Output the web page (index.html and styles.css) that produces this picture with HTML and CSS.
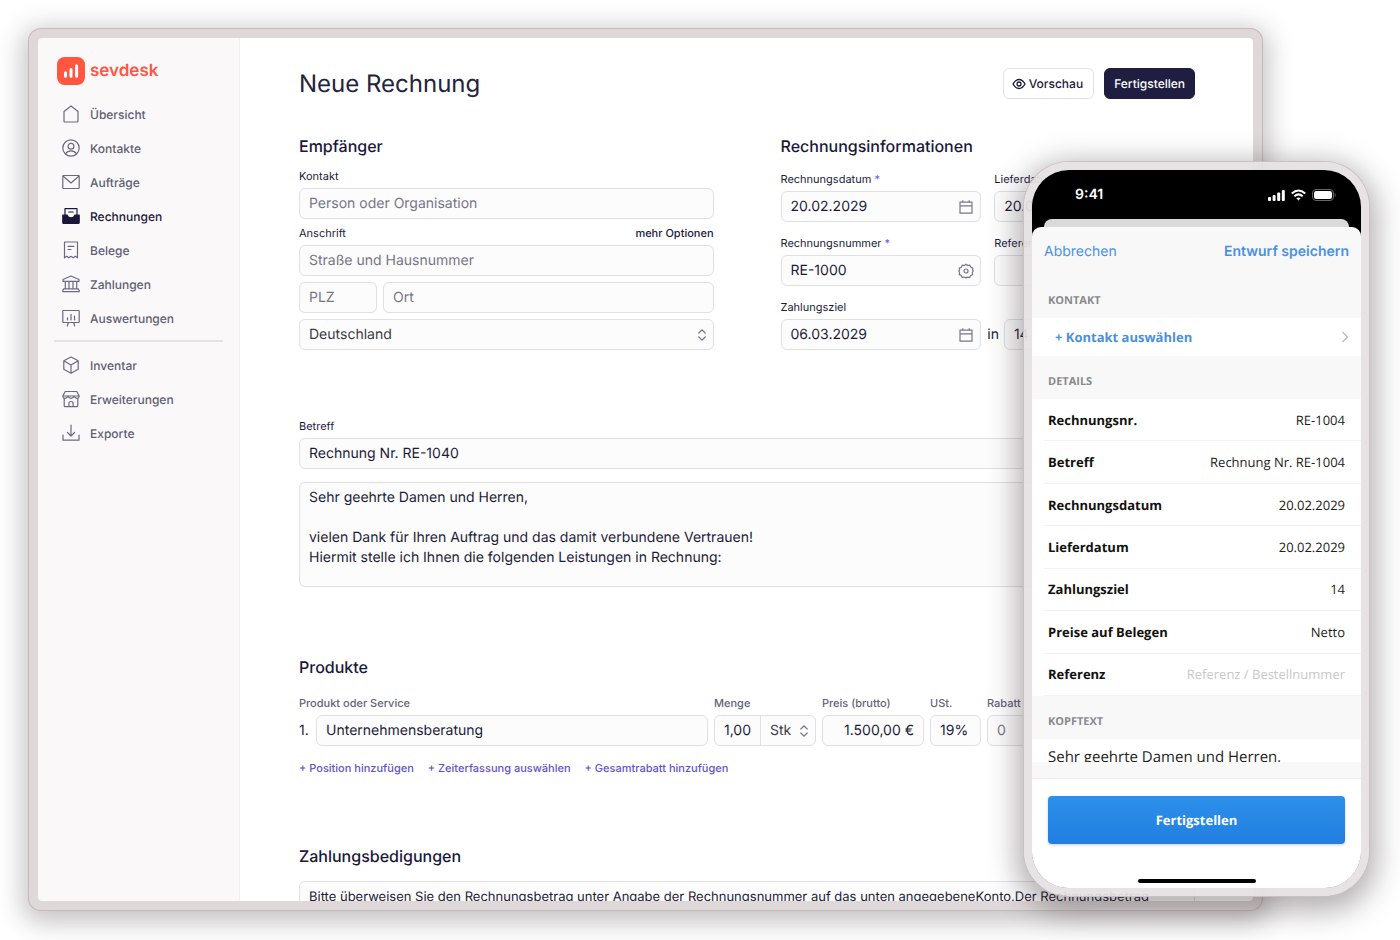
FILE: index.html
```html
<!DOCTYPE html>
<html lang="de">
<head>
<meta charset="utf-8">
<meta name="viewport" content="width=device-width, initial-scale=1">
<title>Neue Rechnung – sevdesk</title>
<link rel="stylesheet" href="styles.css">
</head>
<body>
<svg class="sprite" aria-hidden="true">
  <symbol id="calendar" viewBox="0 0 16 16"><path d="M2 3.200h12v11H2zM2 6.800h12M4.800 1.200v2M11.200 1.200v2"/></symbol>
  <symbol id="updown" viewBox="0 0 10 14"><path d="M1.800 5L5 1.800 8.200 5M1.800 9L5 12.200 8.200 9"/></symbol>
</svg>
<div class="stage">
  <div class="desktop">
    <aside class="sidebar">
      <a class="brand" href="#">
        <svg class="brand-mark" viewBox="0 0 28 28"><rect width="28" height="28" rx="7.500" fill="#ff5640"/><path d="M8.500 15.800v3.400M14 12.500v6.700M19.600 8.700v10.500" stroke="#fff" stroke-width="3" stroke-linecap="round"/></svg>
        <span>sevdesk</span>
      </a>
      <nav class="nav">
        <a href="#"><svg viewBox="0 0 18 18"><path d="M2 6.500L9 1l7 5.500V16q0 1-1 1H3q-1 0-1-1z"/></svg>Übersicht</a>
        <a href="#"><svg viewBox="0 0 18 18"><circle cx="9" cy="9" r="8.200"/><circle cx="9" cy="7.200" r="2.900"/><path d="M3.500 14.800c1.400-2.200 3.300-3 5.500-3s4.100.8 5.500 3"/></svg>Kontakte</a>
        <a href="#"><svg viewBox="0 0 18 18"><rect x=".8" y="2.500" width="16.400" height="13" rx=".8"/><path d="M1.200 3.200L9 10l7.800-6.800"/></svg>Aufträge</a>
        <a href="#" class="active" aria-current="page"><svg viewBox="0 0 18 18"><path d="M3 9V1.700h12V9"/><path d="M6.800 5h4.400"/><path class="solid" d="M.8 8.200h4.400q.8 2.600 3.800 2.600t3.800-2.600h4.400v7.300q0 1-1 1H1.800q-1 0-1-1z"/></svg>Rechnungen</a>
        <a href="#"><svg viewBox="0 0 18 18"><path d="M2.500 1h13v15.800l-2.200-1.500-2.100 1.500L9 15.300l-2.200 1.500-2.100-1.500-2.200 1.500zM6 5.300h6M6 8.500h3"/></svg>Belege</a>
        <a href="#"><svg viewBox="0 0 18 18"><path d="M9 1l8 3.500v1.800H1V4.500zM3.300 6.500v7.200M7 6.500v7.200M11 6.500v7.200M14.700 6.500v7.200M1.800 13.800h14.400M.8 16.600h16.400v-1.300l-1-1.400H1.800l-1 1.400z"/></svg>Zahlungen</a>
        <a href="#"><svg viewBox="0 0 18 18"><rect x=".8" y="1.500" width="16.400" height="12" rx=".8"/><path d="M5.500 8.800V11M9 5.300V11M12.500 7v4M6.300 13.800l-1 3.200M11.700 13.800l1 3.200"/></svg>Auswertungen</a>
      </nav>
      <nav class="nav nav-more">
        <a href="#"><svg viewBox="0 0 18 18"><path d="M9 1l7.200 3.800v8.500L9 17.200l-7.200-3.900V4.800zM1.800 4.800L9 9l7.200-4.200M9 9v8.200"/></svg>Inventar</a>
        <a href="#"><svg viewBox="0 0 18 18"><path d="M3.200 1.500h11.600L17.200 6q-.3 2.400-2.200 2.400T12 6.300q-.9 2.100-3 2.100T6 6.300Q5 8.400 3 8.400T.8 6zM.8 6h16.400M2.200 8.500v7.200q0 1 1 1h11.600q1 0 1-1V8.500M6.900 16.500v-3q0-2 2.100-2t2.100 2v3"/></svg>Erweiterungen</a>
        <a href="#"><svg viewBox="0 0 18 18"><path d="M9 1v10.500M5.500 8.500L9 12l3.500-3.500M1 11v5.200h16V11"/></svg>Exporte</a>
      </nav>
    </aside>

    <main class="content">
      <header class="page-head">
        <h1>Neue Rechnung</h1>
        <div class="actions">
          <button type="button" class="btn"><svg viewBox="0 0 14 12"><path d="M1 6q2.500-4.500 6-4.500T13 6q-2.500 4.500-6 4.500T1 6z"/><circle cx="7" cy="6" r="2"/></svg>Vorschau</button>
          <button type="button" class="btn btn-dark">Fertigstellen</button>
        </div>
      </header>

      <form class="form">
        <div class="columns">
          <section>
            <h2>Empfänger</h2>
            <div class="address">
              <div class="group"><label for="kontakt">Kontakt</label><input class="field" id="kontakt" placeholder="Person oder Organisation"></div>
              <div class="group">
                <div class="label-row"><label for="strasse">Anschrift</label><a href="#">mehr Optionen</a></div>
                <input class="field" id="strasse" placeholder="Straße und Hausnummer">
              </div>
              <div class="city"><input class="field" aria-label="PLZ" placeholder="PLZ"><input class="field" aria-label="Ort" placeholder="Ort"></div>
              <div class="field combo"><select aria-label="Land"><option>Deutschland</option></select><svg class="updown"><use href="#updown"/></svg></div>
            </div>
          </section>
          <section>
            <h2>Rechnungsinformationen</h2>
            <div class="info">
              <div class="group"><label for="rdatum">Rechnungsdatum <span class="req">*</span></label><div class="field combo"><input id="rdatum" value="20.02.2029"><svg class="icon"><use href="#calendar"/></svg></div></div>
              <div class="group"><label for="ldatum">Lieferdatum</label><div class="field combo"><input id="ldatum" value="20.02.2029"></div></div>
              <div class="group"><label for="rnr">Rechnungsnummer <span class="req">*</span></label><div class="field combo"><input id="rnr" value="RE-1000"><svg class="icon" viewBox="0 0 16 16"><circle cx="8" cy="8" r="2"/><path d="M8 1.300l1.700 1.300 2.200-.4.900 2 2 .9-.3 2.200L15.300 8l-1 1.500.3 2.200-2 .8-.9 2-2.100-.4L8 14.900l-1.700-.9-2.100.4-.9-2-2-.8.3-2.200L.8 8l.8-.9-.3-2 2-.9.9-2 2.200.4z"/></svg></div></div>
              <div class="group"><label for="ref">Referenz</label><input class="field" id="ref"></div>
              <div class="group"><label for="ziel">Zahlungsziel</label><div class="field combo"><input id="ziel" value="06.03.2029"><svg class="icon"><use href="#calendar"/></svg></div></div>
              <div class="days"><label for="tage">in</label><input class="field" id="tage" value="14"></div>
            </div>
          </section>
        </div>

        <section class="subject">
          <div class="group"><label for="betreff">Betreff</label><input class="field" id="betreff" value="Rechnung Nr. RE-1040"></div>
          <textarea class="field area" aria-label="Kopftext">Sehr geehrte Damen und Herren,

vielen Dank für Ihren Auftrag und das damit verbundene Vertrauen!
Hiermit stelle ich Ihnen die folgenden Leistungen in Rechnung:</textarea>
        </section>

        <section class="block">
          <h2>Produkte</h2>
          <div class="products">
            <div class="group"><label for="produkt">Produkt oder Service</label><div class="numbered"><span>1.</span><input class="field" id="produkt" value="Unternehmensberatung"></div></div>
            <div class="group"><label for="menge">Menge</label><div class="field combo split"><input id="menge" value="1,00"><div class="unit"><select aria-label="Einheit"><option>Stk</option></select><svg class="updown"><use href="#updown"/></svg></div></div></div>
            <div class="group"><label for="preis">Preis (brutto)</label><input class="field right" id="preis" value="1.500,00 €"></div>
            <div class="group"><label for="ust">USt.</label><input class="field" id="ust" value="19%"></div>
            <div class="group"><label for="rabatt">Rabatt</label><input class="field" id="rabatt" placeholder="0"></div>
          </div>
          <div class="links"><a href="#">+ Position hinzufügen</a><a href="#">+ Zeiterfassung auswählen</a><a href="#">+ Gesamtrabatt hinzufügen</a></div>
        </section>

        <section class="block">
          <h2>Zahlungsbedigungen</h2>
          <textarea class="field area terms" aria-label="Zahlungsbedigungen">Bitte überweisen Sie den Rechnungsbetrag unter Angabe der Rechnungsnummer auf das unten angegebeneKonto.Der Rechnungsbetrag</textarea>
        </section>
      </form>
    </main>
  </div>

  <div class="phone">
    <div class="screen">
      <div class="status">
        <span>9:41</span>
        <div class="status-icons">
          <svg width="17" height="12" viewBox="0 0 17 12" fill="#fff"><rect y="8" width="3" height="4" rx="1"/><rect x="4.600" y="6" width="3" height="6" rx="1"/><rect x="9.200" y="3.500" width="3" height="8.500" rx="1"/><rect x="13.800" y="1" width="3" height="11" rx="1"/></svg>
          <svg width="15" height="12" viewBox="0 0 15 12" fill="none" stroke="#fff" stroke-width="2"><path d="M.8 4.600q6.700-6.200 13.400 0M3.300 7.300q4.200-3.800 8.400 0"/><path d="M7.500 11.500L5.400 9.300q2.100-1.600 4.200 0z" fill="#fff" stroke="none"/></svg>
          <svg width="24" height="12" viewBox="0 0 24 12"><rect x=".5" y=".5" width="21" height="11" rx="3.500" fill="none" stroke="#666"/><rect x="2" y="2" width="18" height="8" rx="2.200" fill="#fff"/><path d="M22.700 4v4q1-.5 1-2t-1-2z" fill="#666"/></svg>
        </div>
      </div>
      <div class="sheet-back"></div>
      <div class="sheet">
        <div class="sheet-nav"><button type="button">Abbrechen</button><button type="button" class="strong">Entwurf speichern</button></div>
        <h3>KONTAKT</h3>
        <button type="button" class="pick"><span>+ Kontakt auswählen</span><svg viewBox="0 0 8 12"><path d="M1.500 1l5 5-5 5"/></svg></button>
        <h3>DETAILS</h3>
        <dl class="details">
          <div><dt>Rechnungsnr.</dt><dd>RE-1004</dd></div>
          <div><dt>Betreff</dt><dd>Rechnung Nr. RE-1004</dd></div>
          <div><dt>Rechnungsdatum</dt><dd>20.02.2029</dd></div>
          <div><dt>Lieferdatum</dt><dd>20.02.2029</dd></div>
          <div><dt>Zahlungsziel</dt><dd>14</dd></div>
          <div><dt>Preise auf Belegen</dt><dd>Netto</dd></div>
          <div><dt><label for="pref">Referenz</label></dt><dd><input id="pref" placeholder="Referenz / Bestellnummer"></dd></div>
        </dl>
        <h3>KOPFTEXT</h3>
        <p class="intro">Sehr geehrte Damen und Herren,</p>
        <footer class="sheet-foot"><button type="button">Fertigstellen</button><div class="home"></div></footer>
      </div>
    </div>
  </div>
</div>
</body>
</html>
```
FILE: styles.css
```css
* { box-sizing: border-box; }
body { margin: 0; background: #fff; color: #1c1b3a; font-family: Inter, sans-serif; font-size: 14px; text-rendering: geometricPrecision; }
h1, h2, h3, p, dl, dd { margin: 0; }
a { color: inherit; text-decoration: none; }
button, input, select, textarea { font: inherit; color: inherit; margin: 0; text-rendering: inherit; }
.sprite { display: none; }
svg { flex: none; }

.stage { position: relative; height: 100vh; min-height: 940px; padding: 29px 138px 30px 29px; overflow: hidden; }

.desktop {
  display: flex;
  height: 100%;
  overflow: hidden;
  border: 9px solid #ded8d8;
  border-radius: 12px;
  background: #ded8d8;
  box-shadow: 0 0 0 1px #c4babc, 0 6px 26px 6px rgba(60, 50, 55, 0.3);
}

/* Sidebar */
.sidebar { flex: none; width: 202px; padding: 19px 16px; background: #faf8f9; border-right: 1px solid #f1eff0; border-radius: 4px 0 0 4px; }
.brand { display: flex; align-items: center; gap: 5px; height: 28px; padding-left: 3px; color: #ff5640; font-size: 17px; font-weight: 600; }
.brand-mark { width: 28px; height: 28px; }
.nav { padding-top: 12px; }
.nav a { display: flex; align-items: center; gap: 10px; height: 34px; padding-left: 8px; color: #5f5e72; font-size: 12px; font-weight: 500; }
.nav svg { width: 18px; height: 18px; fill: none; stroke: #6b6a80; stroke-width: 1.2; stroke-linejoin: round; stroke-linecap: round; }
.nav .active { color: #1a1838; }
.nav .active svg { stroke: #1a1838; }
.nav .solid { fill: #1a1838; }
.nav-more { margin-top: 5px; padding-top: 6px; border-top: 2px solid #e6e3e5; }

/* Main page */
.content { flex: 1; min-width: 0; padding: 30px 58px 0 59px; background: #fff; overflow: hidden; border-radius: 0 4px 4px 0; }
.page-head { display: flex; justify-content: space-between; align-items: center; }
h1 { font-size: 24px; line-height: 30px; font-weight: 400; color: #24233c; }
h2 { font-size: 16px; line-height: 24px; font-weight: 500; color: #1a1838; }
.actions { display: flex; gap: 10px; }
.btn { display: flex; align-items: center; gap: 3px; height: 31px; padding: 0 10px 0 8px; border: 1px solid #e2e1e5; border-radius: 6px; background: #fff; font-size: 12px; font-weight: 500; }
.btn svg { width: 14px; height: 12px; fill: none; stroke: currentColor; stroke-width: 1.3; }
.btn-dark { padding: 0 9px; border-color: #1f1e40; background: #1f1e40; color: #fff; }

.form { padding-top: 35px; }
.columns { display: grid; grid-template-columns: 1fr 1fr; gap: 67px; }
label, .label-row { font-size: 11px; line-height: 16px; }
.label-row { display: flex; justify-content: space-between; }
.label-row a { font-weight: 500; }
.req { color: #6c5ce7; }
.group { display: grid; gap: 4px; align-content: start; min-width: 0; }
.field { width: 100%; min-width: 0; height: 31px; padding: 0 9px; border: 1px solid #e0dfe3; border-radius: 6px; background: #fcfcfc; outline: none; }
.field::placeholder { color: #777589; opacity: 1; }
.combo { display: flex; align-items: center; }
.combo input, .combo select { flex: 1; min-width: 0; width: 100%; height: 100%; padding: 0; border: 0; background: none; outline: none; appearance: none; }
.combo select { color: #3a3a42; }
.icon { width: 16px; height: 16px; margin-right: -3px; fill: none; stroke: #77758a; stroke-width: 1.2; stroke-linejoin: round; }
.updown { width: 10px; height: 14px; margin-right: -3px; fill: none; stroke: #77758a; stroke-width: 1.2; stroke-linecap: round; }
.address { display: grid; gap: 6px; padding-top: 10px; }
.city { display: grid; grid-template-columns: 78px 1fr; gap: 6px; }
.info { display: grid; grid-template-columns: 1fr 1fr; gap: 13px; padding-top: 13px; }
.days { display: flex; align-items: center; gap: 5px; align-self: end; margin-left: -7px; }
.days label { font-size: 14px; }
.days .field { width: 60px; }

.subject { display: grid; gap: 13px; padding-top: 68px; }
.area { display: block; height: 105px; padding: 5px 9px; line-height: 20px; resize: none; overflow: hidden; }
.block { padding-top: 68px; }
.products { display: grid; grid-template-columns: 1fr 102px 102px 51px 208px; gap: 6px; padding-top: 16px; }
.products label { color: #64637a; font-weight: 500; }
.numbered { display: flex; align-items: center; }
.numbered span { flex: none; width: 17px; }
.split { padding: 0 0 0 9px; }
.unit { flex: none; display: flex; align-items: center; width: 55px; height: 100%; padding: 0 9px; border-left: 1px solid #e0dfe3; }
.right { text-align: right; }
.links { display: flex; gap: 14px; padding-top: 14px; color: #5f53cf; font-size: 11px; line-height: 16px; font-weight: 500; }
.terms { margin-top: 13px; font-size: 13px; }

/* Phone lying over the desktop window */
.phone {
  position: absolute;
  top: 162px;
  right: 31px;
  width: 345px;
  height: 734px;
  border: 8px solid rgba(230, 224, 225, 0.94);
  border-radius: 45px;
  box-shadow: 0 0 0 1px #c9c0c1, 0 8px 28px 8px rgba(40, 30, 35, 0.34);
}
.screen { display: flex; flex-direction: column; height: 100%; border-radius: 37px; background: #000; overflow: hidden; }
.status { flex: none; display: flex; justify-content: space-between; align-items: center; height: 49px; padding: 0 25px 0 43px; color: #fff; font-size: 14px; font-weight: 600; }
.status-icons { display: flex; align-items: center; gap: 6px; }
.sheet-back { flex: none; height: 8px; margin: 0 12px; border-radius: 8px 8px 0 0; background: #dadada; }
.sheet { flex: 1; display: flex; flex-direction: column; border-radius: 9px 9px 0 0; background: #f8f8f8; font-family: "Open Sans", sans-serif; font-size: 13px; color: #1d1d22; overflow: hidden; }
.sheet button { border: 0; background: none; padding: 0; }
.sheet-nav { display: flex; justify-content: space-between; align-items: center; height: 48px; padding: 0 12px; font-family: Inter, sans-serif; font-size: 14px; color: #4a90e2; }
.strong { font-weight: 600; }
h3 { display: flex; align-items: center; height: 43px; padding: 9px 16px 0; font-size: 11px; line-height: 16px; font-weight: 700; color: #8a8a8f; }
.sheet .pick { display: flex; justify-content: space-between; align-items: center; height: 38px; padding: 0 12px 0 23px; background: #fff; color: #4a90dc; font-weight: 700; }
.pick svg { width: 8px; height: 12px; fill: none; stroke: #b5b5ba; stroke-width: 1.2; }
.details { display: grid; grid-template-rows: repeat(7, 1fr); height: 297px; padding-left: 12px; background: #fff; }
.details div { display: flex; justify-content: space-between; align-items: center; padding: 0 16px 0 4px; border-bottom: 1px solid #f2f2f2; }
dt { color: #111; font-weight: 700; }
dt label { font-size: 13px; }
dd input { width: 180px; padding: 0; border: 0; background: none; text-align: right; outline: none; }
dd input::placeholder { color: #c8c8cc; opacity: 1; }
.intro { height: 23px; padding: 8px 16px 0; background: #fff; font-size: 15px; line-height: 20px; overflow: hidden; }
.sheet-foot { display: flex; flex-direction: column; justify-content: space-between; align-items: center; height: 110px; margin-top: auto; padding: 17px 16px 5px; border-top: 1px solid #eee; background: #fff; }
.sheet-foot button { width: 100%; height: 48px; border-radius: 4px; background: linear-gradient(#2c90ea, #227fe0); color: #fff; font-weight: 700; box-shadow: 0 1px 3px rgba(0, 0, 0, 0.2); }
.home { width: 118px; height: 4px; border-radius: 2px; background: #000; }
```
